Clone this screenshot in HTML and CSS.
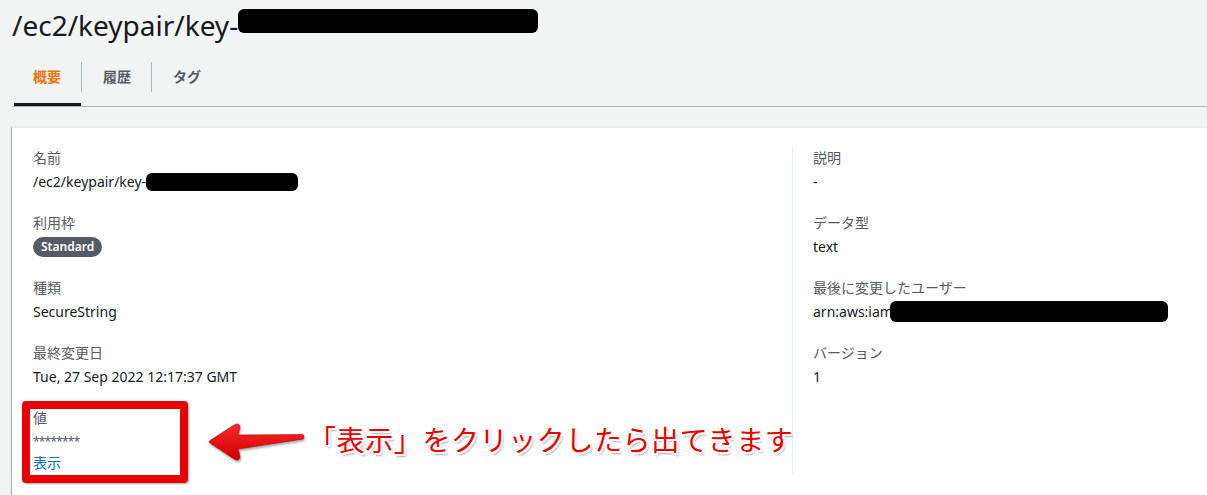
FILE: index.html
```html
<!DOCTYPE html>
<html lang="ja">
<head>
    <meta charset="UTF-8">
    <meta name="viewport" content="width=device-width, initial-scale=1.0">
    <title>/ec2/keypair/key-</title>
    <link rel="stylesheet" href="styles.css">
</head>
<body>

<div class="page">
    <h1 class="title">/ec2/keypair/key-<span class="redact redact-title"></span></h1>

    <ul class="tabs">
        <li class="tab active"><span>概要</span></li>
        <li class="tab"><span>履歴</span></li>
        <li class="tab"><span>タグ</span></li>
    </ul>

    <div class="card">
        <div class="col">
            <div class="field">
                <div class="label">名前</div>
                <div class="value">/ec2/keypair/key-<span class="redact redact-name"></span></div>
            </div>
            <div class="field">
                <div class="label">利用枠</div>
                <div class="value"><span class="badge">Standard</span></div>
            </div>
            <div class="field">
                <div class="label">種類</div>
                <div class="value">SecureString</div>
            </div>
            <div class="field">
                <div class="label">最終変更日</div>
                <div class="value">Tue, 27 Sep 2022 12:17:37 GMT</div>
            </div>
            <div class="field last">
                <div class="label">値</div>
                <div class="value stars">********</div>
                <div class="value show"><a class="link" href="#">表示</a></div>
            </div>
        </div>
        <div class="col col-right">
            <div class="field">
                <div class="label">説明</div>
                <div class="value">-</div>
            </div>
            <div class="field">
                <div class="label">データ型</div>
                <div class="value">text</div>
            </div>
            <div class="field">
                <div class="label">最後に変更したユーザー</div>
                <div class="value">arn:aws:iam:<span class="redact redact-arn"></span></div>
            </div>
            <div class="field">
                <div class="label">バージョン</div>
                <div class="value">1</div>
            </div>
        </div>
    </div>

    <!-- annotation -->
    <div class="mark"></div>
    <svg class="arrow" width="105" height="44" viewBox="0 0 105 44">
        <defs>
            <linearGradient id="red" x1="0" y1="0" x2="0" y2="1">
                <stop offset="0" stop-color="#ff2a2a"/>
                <stop offset="1" stop-color="#c80000"/>
            </linearGradient>
        </defs>
        <path d="M5 23 Q3 22 5 20.5 L29 5 Q34 2 35 7 L33 15 L98 14.5 Q100 16.5 98 19 L33 29 L35 36 Q35 42 29 39 Z"
              fill="url(#red)" stroke="#b00000" stroke-width="0.6" stroke-linejoin="round" class="arrow-path"/>
    </svg>
    <div class="note">「表示」をクリックしたら出てきます</div>
</div>

</body>
</html>
```

FILE: styles.css
```css
*{
    margin: 0;
    padding: 0;
    box-sizing: border-box;
}
html, body{
    height: 100%;
    overflow: hidden;
}

body{
    font-family: "Noto Sans", "Noto Sans CJK JP", sans-serif;
    background: #f2f3f3;
    color: #16191f;
    font-size: 14px;
}

.page{
    position: relative;
    padding: 5px 0 0 12px;
}

.title{
    font-size: 28px;
    line-height: 40px;
    font-weight: 400;
    color: #16191f;
    white-space: nowrap;
}

.redact{
    display: inline-block;
    background: #000;
    border-radius: 6px;
    vertical-align: middle;
}
.redact-title{
    width: 300px;
    height: 24px;
    margin-top: -16px;
}
.redact-name{
    width: 152px;
    height: 18px;
    margin-top: -3px;
}
.redact-arn{
    width: 278px;
    height: 21px;
    margin-top: -3px;
    margin-left: -7px;
}

.tabs{
    list-style: none;
    display: flex;
    margin-top: 17px;
    padding-left: 2px;
    border-bottom: 1px solid #aab7b8;
}
.tab{
    padding-bottom: 11px;
    border-bottom: 3px solid transparent;
    font-weight: 700;
    color: #545b64;
}
.tab span{
    display: block;
    line-height: 30px;
    padding: 0 20px 0 19px;
}
.tab + .tab span{
    border-left: 1px solid #aab7b8;
    padding-left: 21px;
}
.tab.active{
    color: #ec7211;
    border-bottom-color: #16191f;
}

.card{
    margin-top: 20px;
    width: 1560px;
    background: #fff;
    border-top: 1px solid #eaeded;
    box-shadow: 0 1px 1px 0 rgba(0, 28, 36, 0.3),
        -1px 0 1px 0 rgba(0, 28, 36, 0.25);
    padding: 19px 20px 20px 21px;
    display: grid;
    grid-template-columns: 759px 1fr;
}

.col-right{
    border-left: 1px solid #eaeded;
    padding-left: 20px;
}

.field{
    margin-bottom: 20px;
}
.field.last{
    margin-bottom: 0;
}
.label{
    color: #545b64;
    line-height: 22px;
}
.value{
    line-height: 22px;
    height: 23px;
    padding-top: 2px;
    white-space: nowrap;
}
.value.show{
    padding-top: 0;
}
.stars{
    font-size: 12px;
    color: #545b64;
    letter-spacing: -0.8px;
}

.badge{
    display: inline-block;
    background: #545b64;
    color: #fff;
    font-size: 12px;
    font-weight: 600;
    line-height: 20px;
    height: 20px;
    padding: 0 8px;
    border-radius: 10px;
    vertical-align: top;
    margin-top: 1px;
}

.link{
    color: #0073bb;
    text-decoration: none;
}

/* annotation overlay */
.mark{
    position: absolute;
    left: 22px;
    top: 401px;
    width: 166px;
    height: 82px;
    border: 8px solid #e60000;
    border-radius: 4px;
    box-shadow: 1px 1px 2px rgba(0, 0, 0, 0.35);
}
.arrow{
    position: absolute;
    left: 205px;
    top: 420px;
}
.arrow-path{
    filter: drop-shadow(1px 2px 1px rgba(0, 0, 0, 0.35));
}
.note{
    position: absolute;
    left: 308px;
    top: 419px;
    font-family: "Noto Sans CJK JP", sans-serif;
    font-size: 28px;
    line-height: 40px;
    font-weight: 400;
    letter-spacing: 0.6px;
    color: #e60000;
    white-space: nowrap;
    text-shadow: 2px 0 0 #fff, -2px 0 0 #fff, 0 2px 0 #fff, 0 -2px 0 #fff,
        1.5px 1.5px 0 #fff, -1.5px 1.5px 0 #fff, 1.5px -1.5px 0 #fff, -1.5px -1.5px 0 #fff,
        2px 3px 2px rgba(0, 0, 0, 0.35);
}
```
